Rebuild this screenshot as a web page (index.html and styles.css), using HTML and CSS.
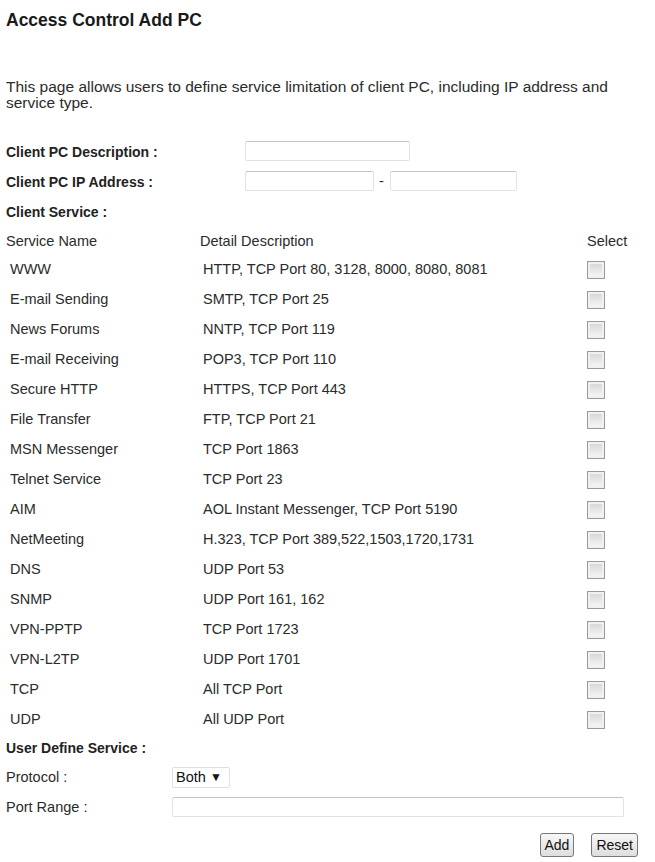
FILE: index.html
```html
<!DOCTYPE html>
<html lang="en">
<head>
    <meta charset="UTF-8">
    <meta name="viewport" content="width=device-width, initial-scale=1.0">
    <title>Access Control Add PC</title>
    <link rel="stylesheet" href="styles.css">
</head>
<body>
    <div class="page">
        <h1>Access Control Add PC</h1>
        <p class="intro">This page allows users to define service limitation of client PC, including IP address and service type.</p>

        <form id="acForm">
            <div class="field">
                <label for="desc">Client PC Description :</label>
                <input type="text" id="desc" class="txt txt-desc">
            </div>
            <div class="field">
                <label for="ipStart">Client PC IP Address :</label>
                <input type="text" id="ipStart" class="txt txt-ip">
                <span class="dash">-</span>
                <input type="text" id="ipEnd" class="txt txt-ip2">
            </div>
            <div class="field">
                <label>Client Service :</label>
            </div>

            <div class="services">
                <div class="svc-head">
                    <span>Service Name</span>
                    <span>Detail Description</span>
                    <span>Select</span>
                </div>
                <div class="svc-row"><span class="name">WWW</span><span class="detail">HTTP, TCP Port 80, 3128, 8000, 8080, 8081</span><input type="checkbox" class="chk"></div>
                <div class="svc-row"><span class="name">E-mail Sending</span><span class="detail">SMTP, TCP Port 25</span><input type="checkbox" class="chk"></div>
                <div class="svc-row"><span class="name">News Forums</span><span class="detail">NNTP, TCP Port 119</span><input type="checkbox" class="chk"></div>
                <div class="svc-row"><span class="name">E-mail Receiving</span><span class="detail">POP3, TCP Port 110</span><input type="checkbox" class="chk"></div>
                <div class="svc-row"><span class="name">Secure HTTP</span><span class="detail">HTTPS, TCP Port 443</span><input type="checkbox" class="chk"></div>
                <div class="svc-row"><span class="name">File Transfer</span><span class="detail">FTP, TCP Port 21</span><input type="checkbox" class="chk"></div>
                <div class="svc-row"><span class="name">MSN Messenger</span><span class="detail">TCP Port 1863</span><input type="checkbox" class="chk"></div>
                <div class="svc-row"><span class="name">Telnet Service</span><span class="detail">TCP Port 23</span><input type="checkbox" class="chk"></div>
                <div class="svc-row"><span class="name">AIM</span><span class="detail">AOL Instant Messenger, TCP Port 5190</span><input type="checkbox" class="chk"></div>
                <div class="svc-row"><span class="name">NetMeeting</span><span class="detail">H.323, TCP Port 389,522,1503,1720,1731</span><input type="checkbox" class="chk"></div>
                <div class="svc-row"><span class="name">DNS</span><span class="detail">UDP Port 53</span><input type="checkbox" class="chk"></div>
                <div class="svc-row"><span class="name">SNMP</span><span class="detail">UDP Port 161, 162</span><input type="checkbox" class="chk"></div>
                <div class="svc-row"><span class="name">VPN-PPTP</span><span class="detail">TCP Port 1723</span><input type="checkbox" class="chk"></div>
                <div class="svc-row"><span class="name">VPN-L2TP</span><span class="detail">UDP Port 1701</span><input type="checkbox" class="chk"></div>
                <div class="svc-row"><span class="name">TCP</span><span class="detail">All TCP Port</span><input type="checkbox" class="chk"></div>
                <div class="svc-row"><span class="name">UDP</span><span class="detail">All UDP Port</span><input type="checkbox" class="chk"></div>
            </div>

            <div class="field field-user">
                <label>User Define Service :</label>
            </div>
            <div class="user-row">
                <span class="plain">Protocol :</span>
                <span class="select-wrap">
                    <select class="sel">
                        <option>Both</option>
                        <option>TCP</option>
                        <option>UDP</option>
                    </select>
                    <span class="caret">&#9660;</span>
                </span>
            </div>
            <div class="user-row">
                <span class="plain">Port Range :</span>
                <input type="text" class="txt txt-range">
            </div>

            <div class="actions">
                <button type="submit" class="btn">Add</button>
                <button type="reset" class="btn">Reset</button>
            </div>
        </form>
    </div>
</body>
</html>
```

FILE: styles.css
```css
* {
    margin: 0;
    padding: 0;
    box-sizing: border-box;
}

body {
    font-family: 'Liberation Sans', Arial, sans-serif;
    font-size: 14.5px;
    color: #2b2b2b;
    background: #fff;
}

.page {
    padding: 10px 6px 0 6px;
}

h1 {
    font-size: 17.5px;
    line-height: 20px;
    color: #1a1a1a;
}

.intro {
    margin-top: 49px;
    font-size: 15.5px;
    line-height: 16px;
    width: 615px;
}

form {
    margin-top: 26px;
}

.field {
    display: flex;
    align-items: center;
    height: 30px;
}

.field label {
    width: 239px;
    font-size: 14px;
    font-weight: bold;
    color: #222;
}

.txt {
    height: 20px;
    border: 1px solid #e2e2e2;
    border-top-color: #c4c4c4;
    border-radius: 2px;
    background: #fff;
    font-size: 13px;
    margin-top: -3px;
}

.txt-desc {
    width: 165px;
}

.txt-ip {
    width: 129px;
}

.txt-ip2 {
    width: 127px;
}

.dash {
    margin: -3px 6px 0 5px;
}

.svc-head,
.svc-row {
    display: grid;
    grid-template-columns: 194px 387px auto;
    align-items: center;
}

.svc-head {
    height: 27px;
}

.svc-row {
    height: 30px;
}

.svc-row .name {
    padding-left: 4px;
}

.svc-row .detail {
    padding-left: 3px;
}

.chk {
    appearance: none;
    -webkit-appearance: none;
    width: 18px;
    height: 18px;
    margin-top: 2px;
    border: 1px solid #9a9a9a;
    background: linear-gradient(#d4d4d4, #f8f8f8);
    box-shadow: inset 0 0 0 2px #f0f0f0;
}

.field-user {
    height: 28px;
}

.user-row {
    display: flex;
    align-items: center;
    height: 30px;
}

.plain {
    width: 166px;
}

.select-wrap {
    position: relative;
    display: inline-block;
}

.sel {
    appearance: none;
    -webkit-appearance: none;
    width: 58px;
    height: 21px;
    padding-left: 3px;
    border: 1px solid #e0e0e0;
    border-radius: 2px;
    background: #fff;
    font-family: inherit;
    font-size: 14.5px;
    color: #111;
}

.caret {
    position: absolute;
    right: 8px;
    top: 3px;
    font-size: 12px;
    color: #111;
    pointer-events: none;
}

.txt-range {
    width: 452px;
    margin-top: 0;
}

.actions {
    display: flex;
    justify-content: flex-end;
    gap: 17px;
    padding-right: 11px;
    margin-top: 11px;
}

.btn {
    height: 24px;
    padding: 0 4px;
    border: 1px solid #777;
    border-radius: 3px;
    background: linear-gradient(#f7f7f7, #dedede);
    font-family: inherit;
    font-size: 14px;
    color: #111;
    cursor: pointer;
}
```
